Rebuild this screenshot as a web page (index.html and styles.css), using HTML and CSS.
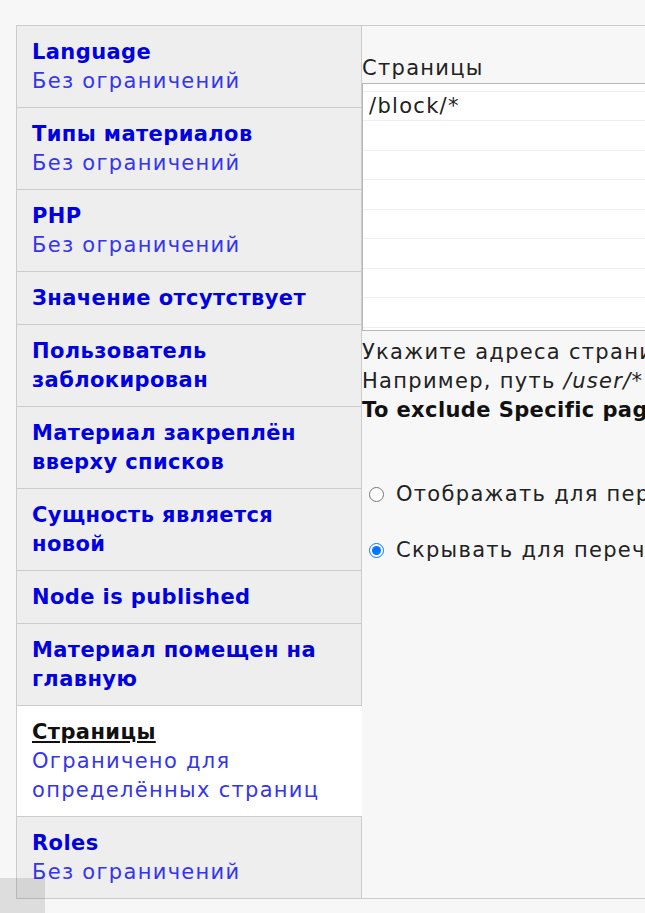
FILE: index.html
```html
<!DOCTYPE html>
<html lang="ru">
<head>
    <meta charset="UTF-8">
    <meta name="viewport" content="width=device-width, initial-scale=1.0">
    <title>Видимость блока</title>
    <link rel="stylesheet" href="styles.css">
</head>
<body>
    <div class="vertical-tabs">
        <ul class="tabs-menu">
            <li class="tab"><a href="#"><strong>Language</strong><span class="summary">Без ограничений</span></a></li>
            <li class="tab"><a href="#"><strong>Типы материалов</strong><span class="summary">Без ограничений</span></a></li>
            <li class="tab"><a href="#"><strong>PHP</strong><span class="summary">Без ограничений</span></a></li>
            <li class="tab"><a href="#"><strong>Значение отсутствует</strong></a></li>
            <li class="tab"><a href="#"><strong>Пользователь заблокирован</strong></a></li>
            <li class="tab"><a href="#"><strong>Материал закреплён вверху списков</strong></a></li>
            <li class="tab"><a href="#"><strong>Сущность является новой</strong></a></li>
            <li class="tab"><a href="#"><strong>Node is published</strong></a></li>
            <li class="tab"><a href="#"><strong>Материал помещен на главную</strong></a></li>
            <li class="tab selected"><a href="#"><strong>Страницы</strong><span class="summary">Ограничено для определённых страниц</span></a></li>
            <li class="tab"><a href="#"><strong>Roles</strong><span class="summary">Без ограничений</span></a></li>
        </ul>

        <div class="tabs-pane">
            <label for="pages" class="field-label">Страницы</label>
            <textarea id="pages" rows="8" readonly>/block/*</textarea>
            <div class="description">
                Укажите адреса страниц, используя их пути. Вводите один путь на строку.<br>
                Например, путь <em>/user/*</em> означает все личные страницы пользователей.<br>
                <strong>To exclude Specific pages, use the "Hide for the listed pages" option below.</strong>
            </div>

            <div class="radios">
                <label class="radio"><input type="radio" name="negate"> Отображать для перечисленных страниц</label>
                <label class="radio"><input type="radio" name="negate" checked> Скрывать для перечисленных страниц</label>
            </div>
        </div>
    </div>

    <div class="scroll-corner"></div>
</body>
</html>
```

FILE: styles.css
```css
body {
    margin: 0;
    background: #f7f7f7;
    font-family: "DejaVu Sans", sans-serif;
    font-size: 21px;
    line-height: 29px;
    letter-spacing: 1.3px;
    color: #222;
    overflow: hidden;
}

strong {
    letter-spacing: 0.4px;
}

.vertical-tabs {
    display: flex;
    width: 1200px;
    margin: 25px 0 0 16px;
}

.tabs-menu {
    list-style: none;
    margin: 0;
    padding: 0;
    width: 344px;
    flex-shrink: 0;
    border-left: 1px solid #ccc;
    border-top: 1px solid #ccc;
}

.tab {
    background: #eee;
    border-bottom: 1px solid #ccc;
}

.tab a {
    display: block;
    padding: 12px 15px 11px;
    color: #0000e0;
    text-decoration: none;
}

.tab strong {
    display: block;
    font-weight: bold;
}

.summary {
    display: block;
    color: #3535ee;
}

.tab.selected {
    background: #fff;
    position: relative;
    margin-right: -1px;
}

.tab.selected strong {
    color: #111;
    text-decoration: underline;
}

.tabs-pane {
    flex: 1;
    border: 1px solid #ccc;
    border-right: 0;
    background: #f7f7f7;
}

.field-label {
    display: block;
    margin-top: 28px;
}

textarea {
    display: block;
    box-sizing: border-box;
    width: 100%;
    height: 248px;
    margin: 0;
    padding: 8px 6px;
    border: 1px solid #b8b8b8;
    font: inherit;
    letter-spacing: inherit;
    line-height: 29.5px;
    color: #222;
    resize: none;
    background-color: #fff;
    background-image: repeating-linear-gradient(to bottom, #efefef 0, #efefef 1px, transparent 1px, transparent 29.5px);
    background-position: 0 7px;
}

.description {
    margin-top: 7px;
    white-space: nowrap;
}

.description strong {
    color: #111;
}

.radios {
    margin-top: 55px;
}

.radio {
    display: flex;
    align-items: center;
    margin-bottom: 27px;
    white-space: nowrap;
}

.radio input {
    width: 15px;
    height: 15px;
    margin: 0 12px 0 7px;
}

.scroll-corner {
    position: fixed;
    left: 0;
    bottom: 0;
    width: 45px;
    height: 35px;
    background: rgba(0, 0, 0, 0.1);
}
```
